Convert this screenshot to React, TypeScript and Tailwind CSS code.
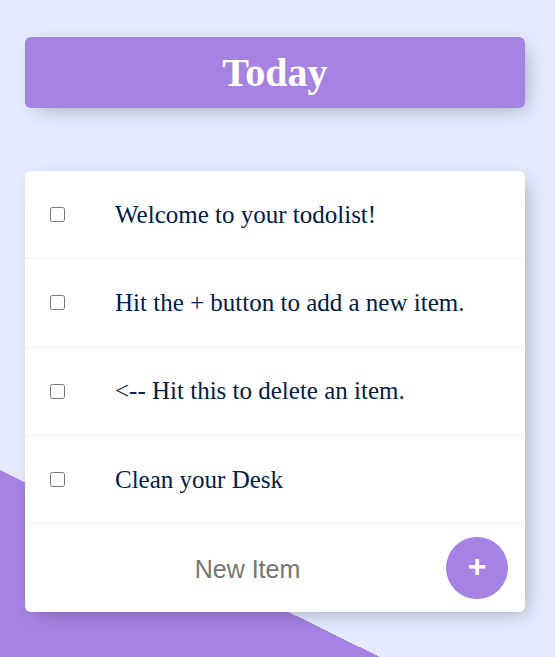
import React from 'react';

const items = [
  'Welcome to your todolist!',
  'Hit the + button to add a new item.',
  '<-- Hit this to delete an item.',
  'Clean your Desk',
];

export default function App() {
  return (
    <div className="min-h-screen w-full bg-[#E4E9FD] bg-[linear-gradient(26.2deg,#A683E3_167.7px,#E4E9FD_167.7px)] pt-[37px]">
      {/* Heading */}
      <div className="ml-[25px] w-[500px] rounded-[6px] bg-[#A683E3] shadow-[6px_6px_19px_-6px_rgba(0,0,0,0.3)]">
        <h1 className="m-0 py-[12.5px] text-center text-[40px] font-bold leading-[46px] text-white [font-family:'Liberation_Serif',serif]">
          Today
        </h1>
      </div>

      {/* List */}
      <div className="ml-[25px] mt-[63px] w-[500px] rounded-[6px] bg-white shadow-[6px_6px_19px_-6px_rgba(0,0,0,0.3)]">
        {items.map((text) => (
          <div
            key={text}
            className="flex h-[88.25px] items-center border-b border-[#F1F1F1]"
          >
            <input
              type="checkbox"
              className="m-[25px] h-[15px] w-[15px] shrink-0"
            />
            <p className="m-0 px-[25px] text-[25px] text-[#00204a] [font-family:'Liberation_Serif',serif]">
              {text}
            </p>
          </div>
        ))}

        {/* New item form */}
        <form className="flex h-[88px] items-center pl-[27px]">
          <input
            type="text"
            placeholder="New Item"
            className="h-[75px] w-[391px] border-none bg-transparent pt-[2px] text-center text-[25px] text-[#00204a] outline-none placeholder:text-[#757575] [font-family:'Liberation_Sans',Arial,sans-serif]"
          />
          <button
            type="button"
            className="ml-[3px] flex h-[62px] w-[62px] items-center justify-center rounded-full bg-[#A683E3] pb-[4px] text-[32px] font-bold leading-none text-white [font-family:'Liberation_Sans',Arial,sans-serif]"
          >
            +
          </button>
        </form>
      </div>
    </div>
  );
}
